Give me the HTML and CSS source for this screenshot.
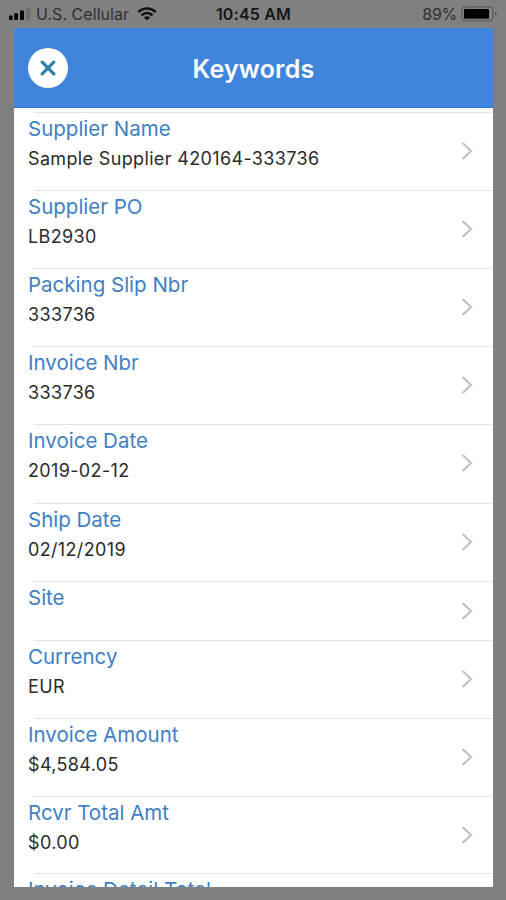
FILE: index.html
```
<!DOCTYPE html>
<html lang="en">
<head>
<meta charset="utf-8">
<title>Keywords</title>
<link rel="stylesheet" href="styles.css">
</head>
<body>
<div class="status">
  <div class="carrier">
    <svg class="signal" width="22" height="12" viewBox="0 0 22 12"><rect x="0" y="7.5" width="3.6" height="4.5" rx="1"/><rect x="5.2" y="5" width="3.8" height="7" rx="1"/><rect x="11" y="2.5" width="4" height="9.5" rx="1"/><rect class="off" x="17.5" y="0" width="3.5" height="12" rx="1"/></svg>
    <span class="carrier-name">U.S. Cellular</span>
    <svg class="wifi" width="20" height="14" viewBox="0 0 20 14"><path d="M1.3 5.2C6.1.2 13.9.2 18.7 5.2M4.4 8.4c3.1-3.2 8.1-3.2 11.2 0"/><path class="dot" d="M10 13.6 6.9 10.6c1.8-1.7 4.4-1.7 6.2 0z"/></svg>
  </div>
  <span class="time">10:45 AM</span>
  <div class="power">
    <span class="percent">89%</span>
    <svg class="battery" width="37" height="16" viewBox="0 0 37 16"><rect class="case" x=".8" y=".8" width="31" height="14" rx="3.5"/><rect x="3" y="3" width="25" height="9.8" rx="1"/><path class="tip" d="M34 5.5c2.7 1 2.7 3.5 0 4.5z"/></svg>
  </div>
</div>
<main class="modal">
  <header class="bar">
    <button class="close" aria-label="Close"><svg width="16" height="16" viewBox="0 0 16 16"><path d="m2.2 2.2 11.6 11.6M13.8 2.2 2.2 13.8"/></svg></button>
    <h1 class="title">Keywords</h1>
  </header>
  <ul class="list">
    <li class="row"><div><div class="label">Supplier Name</div><div class="value">Sample Supplier 420164-333736</div></div><svg class="chev" viewBox="0 0 12 20"><path d="m1.5 2 8.5 8-8.5 8"/></svg></li>
    <li class="row"><div><div class="label">Supplier PO</div><div class="value">LB2930</div></div><svg class="chev" viewBox="0 0 12 20"><path d="m1.5 2 8.5 8-8.5 8"/></svg></li>
    <li class="row"><div><div class="label">Packing Slip Nbr</div><div class="value">333736</div></div><svg class="chev" viewBox="0 0 12 20"><path d="m1.5 2 8.5 8-8.5 8"/></svg></li>
    <li class="row"><div><div class="label">Invoice Nbr</div><div class="value">333736</div></div><svg class="chev" viewBox="0 0 12 20"><path d="m1.5 2 8.5 8-8.5 8"/></svg></li>
    <li class="row"><div><div class="label">Invoice Date</div><div class="value">2019-02-12</div></div><svg class="chev" viewBox="0 0 12 20"><path d="m1.5 2 8.5 8-8.5 8"/></svg></li>
    <li class="row"><div><div class="label">Ship Date</div><div class="value">02/12/2019</div></div><svg class="chev" viewBox="0 0 12 20"><path d="m1.5 2 8.5 8-8.5 8"/></svg></li>
    <li class="row empty"><div><div class="label">Site</div></div><svg class="chev" viewBox="0 0 12 20"><path d="m1.5 2 8.5 8-8.5 8"/></svg></li>
    <li class="row"><div><div class="label">Currency</div><div class="value">EUR</div></div><svg class="chev" viewBox="0 0 12 20"><path d="m1.5 2 8.5 8-8.5 8"/></svg></li>
    <li class="row short"><div><div class="label">Invoice Amount</div><div class="value">$4,584.05</div></div><svg class="chev" viewBox="0 0 12 20"><path d="m1.5 2 8.5 8-8.5 8"/></svg></li>
    <li class="row short"><div><div class="label">Rcvr Total Amt</div><div class="value">$0.00</div></div><svg class="chev" viewBox="0 0 12 20"><path d="m1.5 2 8.5 8-8.5 8"/></svg></li>
    <li class="row"><div><div class="label">Invoice Detail Total</div></div></li>
  </ul>
</main>
</body>
</html>
```
FILE: styles.css
```
* { box-sizing: border-box; }
body {
  margin: 0;
  height: 900px;
  overflow: hidden;
  background: #808080;
  font-family: Inter, "Liberation Sans", sans-serif;
}
.status {
  display: grid;
  grid-template-columns: 1fr auto 1fr;
  align-items: center;
  height: 28px;
  padding: 0 8px 1px 9px;
  font-size: 16px;
  color: #303030;
}
.carrier, .power { display: flex; align-items: center; }
.carrier-name { margin: 0 8px 0 5px; letter-spacing: .05px; white-space: nowrap; }
.signal .off { fill: #6c6c6c; }
.wifi { fill: none; stroke: #111; stroke-width: 2.4; }
.wifi .dot { fill: #111; stroke: none; }
.time { color: #161616; font-weight: 600; letter-spacing: .2px; }
.power { justify-content: flex-end; gap: 4px; }
.percent { letter-spacing: -.3px; }
.battery .case { fill: none; stroke: #5c5c5c; stroke-width: 1.2; }
.battery .tip { fill: #5c5c5c; }
.modal {
  height: 859px;
  margin: 0 13px 0 14px;
  overflow: hidden;
  background: #fff;
}
.bar {
  display: grid;
  grid-template-columns: 40px 1fr 40px;
  align-items: center;
  height: 80px;
  padding: 0 14px;
  background: #4184dc;
  border-bottom: 1px solid #3377cd;
}
.close {
  display: grid;
  place-items: center;
  width: 40px;
  height: 40px;
  padding: 0;
  border: 0;
  border-radius: 50%;
  background: #fff;
}
.close path { fill: none; stroke: #337eaa; stroke-width: 3.3; stroke-linecap: round; }
.title { margin: 0; padding-top: 2px; color: #fff; font-size: 25px; font-weight: 600; letter-spacing: .2px; text-align: center; }
.list { margin: 0; padding: 3.7px 0 0; list-style: none; }
.row {
  display: flex;
  justify-content: space-between;
  height: 78.2px;
  padding: 4px 20px 0 14px;
  background: linear-gradient(#e4e4e4, #e4e4e4) 20px 0 / 100% 1px no-repeat;
}
.empty { height: 59.2px; }
.short { height: 77.4px; }
.label { color: #4080c5; font-size: 20.5px; line-height: 25px; white-space: nowrap; }
.value { padding-top: 6px; color: #2b2b2b; font-size: 18px; line-height: 24px; letter-spacing: .35px; white-space: nowrap; }
.chev { width: 12px; height: 20px; margin-top: 25px; fill: none; stroke: #c2c2c2; stroke-width: 2.2; }
.empty .chev { margin-top: 16px; }
```
